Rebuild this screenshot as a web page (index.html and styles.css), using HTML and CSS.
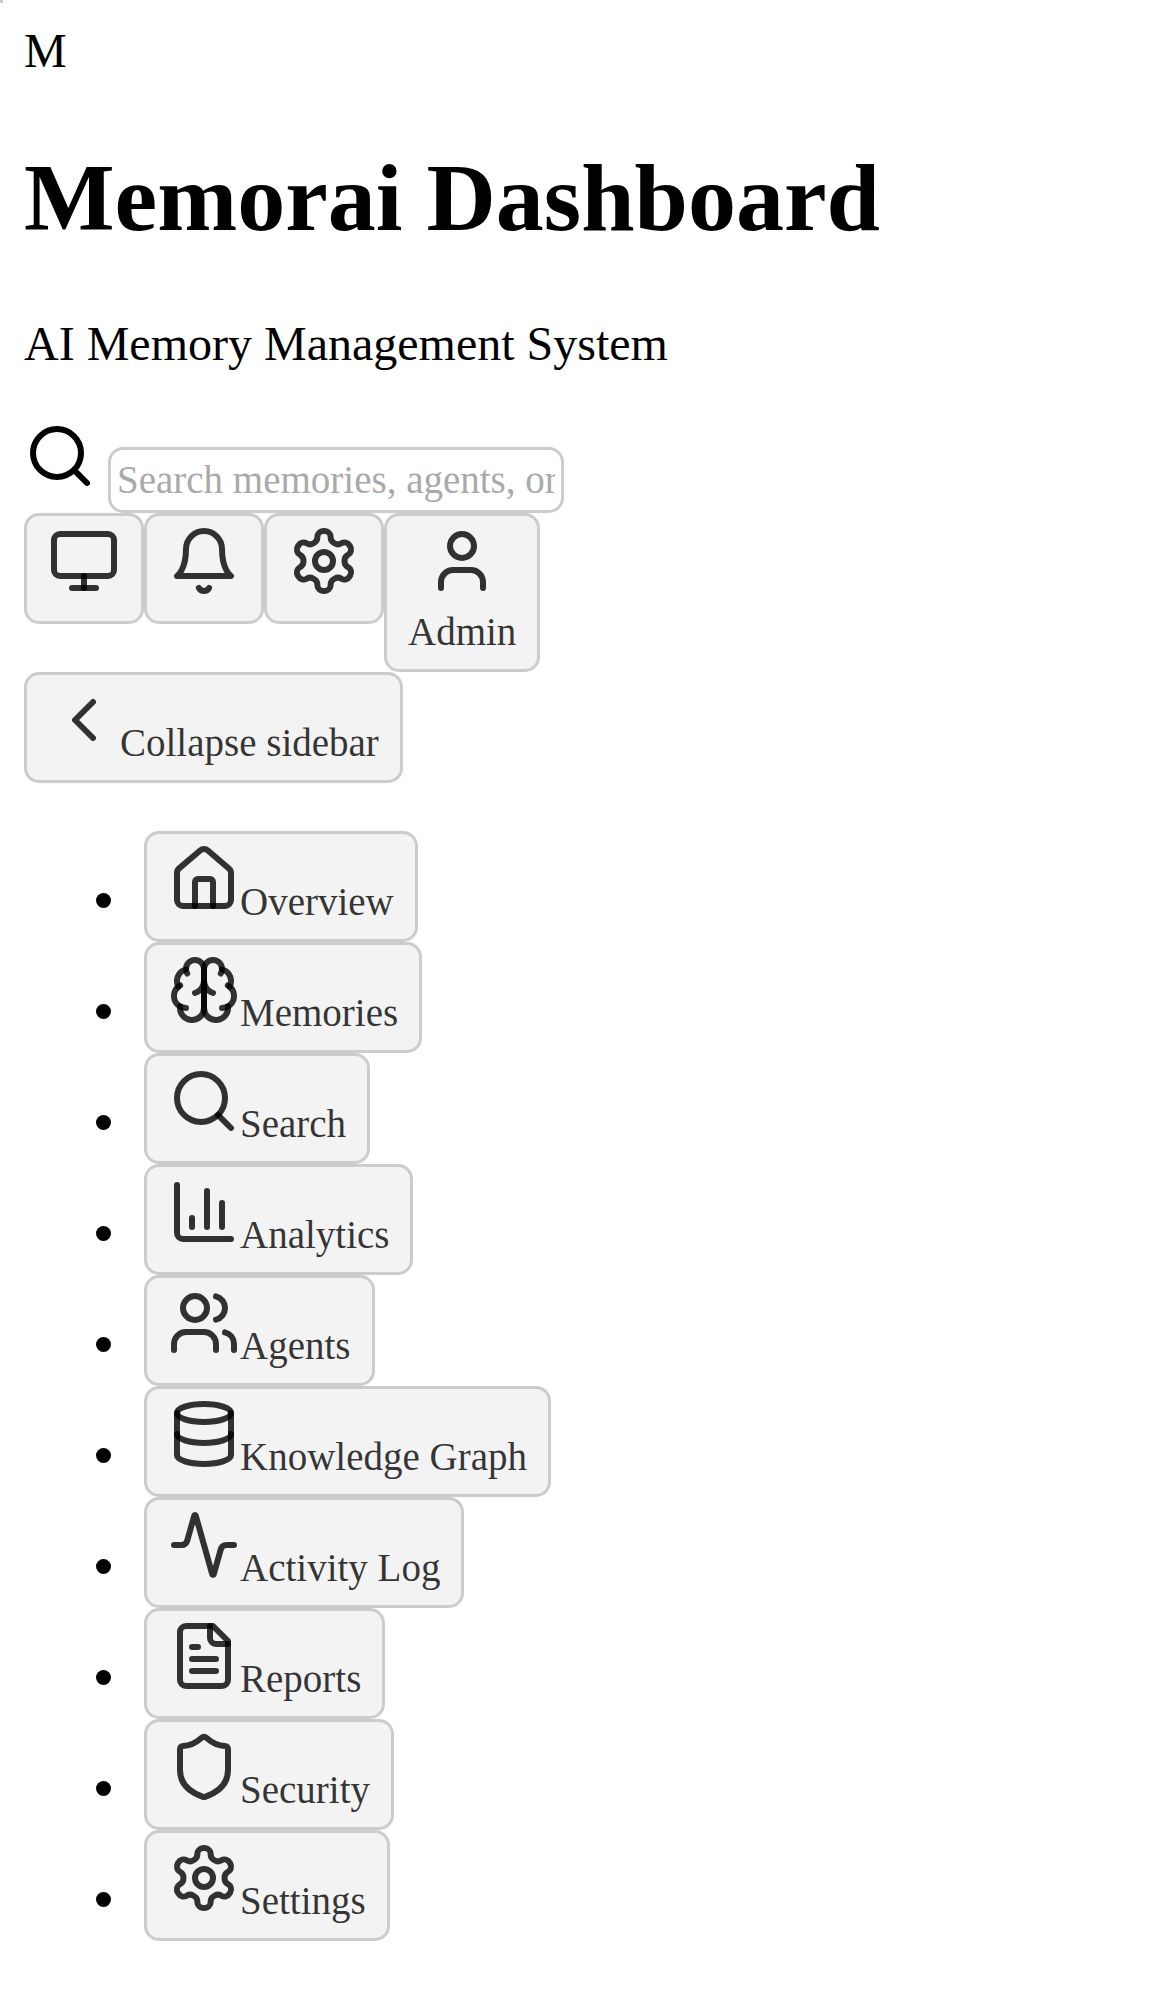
FILE: index.html
```html
<!DOCTYPE html>
<html lang="en">
<head>
<meta charset="utf-8">
<title>Memorai Dashboard</title>
<link rel="stylesheet" href="styles.css">
</head>
<body>
<span class="marker"></span>
<header>
<div>M</div>
<h1 class="title">Memorai Dashboard</h1>
<p class="subtitle">AI Memory Management System</p>
<div class="search">
<svg class="icon" viewBox="0 0 24 24"><circle cx="11" cy="11" r="8"/><path d="m21 21-4.3-4.3"/></svg>
<input class="field" type="text" aria-label="Search" placeholder="Search memories, agents, or content...">
</div>
<div class="actions">
<button class="btn" aria-label="Theme"><svg class="icon" viewBox="0 0 24 24"><rect width="20" height="14" x="2" y="3" rx="2"/><path d="M8 21h8"/><path d="M12 17v4"/></svg></button>
<button class="btn" aria-label="Notifications"><svg class="icon" viewBox="0 0 24 24"><path d="M6 8a6 6 0 0 1 12 0c0 7 3 9 3 9H3s3-2 3-9"/><path d="M10.3 21a1.94 1.94 0 0 0 3.4 0"/></svg></button>
<button class="btn" aria-label="Settings"><svg class="icon" viewBox="0 0 24 24"><path d="M12.22 2h-.44a2 2 0 0 0-2 2v.18a2 2 0 0 1-1 1.73l-.43.25a2 2 0 0 1-2 0l-.15-.08a2 2 0 0 0-2.73.73l-.22.38a2 2 0 0 0 .73 2.73l.15.1a2 2 0 0 1 1 1.72v.51a2 2 0 0 1-1 1.74l-.15.09a2 2 0 0 0-.73 2.73l.22.38a2 2 0 0 0 2.73.73l.15-.08a2 2 0 0 1 2 0l.43.25a2 2 0 0 1 1 1.73V20a2 2 0 0 0 2 2h.44a2 2 0 0 0 2-2v-.18a2 2 0 0 1 1-1.73l.43-.25a2 2 0 0 1 2 0l.15.08a2 2 0 0 0 2.73-.73l.22-.39a2 2 0 0 0-.73-2.73l-.15-.08a2 2 0 0 1-1-1.74v-.5a2 2 0 0 1 1-1.74l.15-.09a2 2 0 0 0 .73-2.73l-.22-.38a2 2 0 0 0-2.73-.73l-.15.08a2 2 0 0 1-2 0l-.43-.25a2 2 0 0 1-1-1.73V4a2 2 0 0 0-2-2z"/><circle cx="12" cy="12" r="3"/></svg></button>
<button class="btn"><svg class="icon" viewBox="0 0 24 24"><path d="M19 21v-2a4 4 0 0 0-4-4H9a4 4 0 0 0-4 4v2"/><circle cx="12" cy="7" r="4"/></svg><span class="user">Admin</span></button>
</div>
</header>
<nav>
<button class="btn"><svg class="icon" viewBox="0 0 24 24"><path d="m15 18-6-6 6-6"/></svg>Collapse sidebar</button>
<ul class="menu">
<li class="item"><button class="btn"><svg class="icon" viewBox="0 0 24 24"><path d="M15 21v-8a1 1 0 0 0-1-1h-4a1 1 0 0 0-1 1v8"/><path d="M3 10a2 2 0 0 1 .709-1.528l7-5.999a2 2 0 0 1 2.582 0l7 5.999A2 2 0 0 1 21 10v9a2 2 0 0 1-2 2H5a2 2 0 0 1-2-2z"/></svg>Overview</button></li>
<li class="item"><button class="btn"><svg class="icon" viewBox="0 0 24 24"><path d="M12 5a3 3 0 1 0-5.997.125 4 4 0 0 0-2.526 5.77 4 4 0 0 0 .556 6.588A4 4 0 1 0 12 18Z"/><path d="M12 5a3 3 0 1 1 5.997.125 4 4 0 0 1 2.526 5.77 4 4 0 0 1-.556 6.588A4 4 0 1 1 12 18Z"/><path d="M15 13a4.5 4.5 0 0 1-3-4 4.5 4.5 0 0 1-3 4"/><path d="M17.599 6.5a3 3 0 0 0 .399-1.375"/><path d="M6.003 5.125A3 3 0 0 0 6.401 6.5"/><path d="M3.477 10.896a4 4 0 0 1 .585-.396"/><path d="M19.938 10.5a4 4 0 0 1 .585.396"/><path d="M6 18a4 4 0 0 1-1.967-.516"/><path d="M19.967 17.484A4 4 0 0 1 18 18"/></svg>Memories</button></li>
<li class="item"><button class="btn"><svg class="icon" viewBox="0 0 24 24"><circle cx="11" cy="11" r="8"/><path d="m21 21-4.3-4.3"/></svg>Search</button></li>
<li class="item"><button class="btn"><svg class="icon" viewBox="0 0 24 24"><path d="M3 3v16a2 2 0 0 0 2 2h16"/><path d="M18 17V9"/><path d="M13 17V5"/><path d="M8 17v-3"/></svg>Analytics</button></li>
<li class="item"><button class="btn"><svg class="icon" viewBox="0 0 24 24"><path d="M16 21v-2a4 4 0 0 0-4-4H6a4 4 0 0 0-4 4v2"/><circle cx="9" cy="7" r="4"/><path d="M22 21v-2a4 4 0 0 0-3-3.87"/><path d="M16 3.13a4 4 0 0 1 0 7.75"/></svg>Agents</button></li>
<li class="item"><button class="btn"><svg class="icon" viewBox="0 0 24 24"><ellipse cx="12" cy="5" rx="9" ry="3"/><path d="M3 5v14a9 3 0 0 0 18 0V5"/><path d="M3 12a9 3 0 0 0 18 0"/></svg>Knowledge Graph</button></li>
<li class="item"><button class="btn"><svg class="icon" viewBox="0 0 24 24"><path d="M22 12h-2.480a2 2 0 0 0-1.930 1.460l-2.350 8.360a.25.25 0 0 1-.480 0L9.240 2.180a.25.25 0 0 0-.480 0l-2.350 8.360A2 2 0 0 1 4.490 12H2"/></svg>Activity Log</button></li>
<li class="item"><button class="btn"><svg class="icon" viewBox="0 0 24 24"><path d="M15 2H6a2 2 0 0 0-2 2v16a2 2 0 0 0 2 2h12a2 2 0 0 0 2-2V7Z"/><path d="M14 2v4a2 2 0 0 0 2 2h4"/><path d="M10 9H8"/><path d="M16 13H8"/><path d="M16 17H8"/></svg>Reports</button></li>
<li class="item"><button class="btn"><svg class="icon" viewBox="0 0 24 24"><path d="M20 13c0 5-3.500 7.500-7.660 8.950a1 1 0 0 1-.670-.010C7.500 20.500 4 18 4 13V6a1 1 0 0 1 1-1c2 0 4.500-1.200 6.240-2.720a1.170 1.170 0 0 1 1.520 0C14.510 3.810 17 5 19 5a1 1 0 0 1 1 1z"/></svg>Security</button></li>
<li class="item"><button class="btn"><svg class="icon" viewBox="0 0 24 24"><path d="M12.22 2h-.44a2 2 0 0 0-2 2v.18a2 2 0 0 1-1 1.73l-.43.25a2 2 0 0 1-2 0l-.15-.08a2 2 0 0 0-2.73.73l-.22.38a2 2 0 0 0 .73 2.73l.15.1a2 2 0 0 1 1 1.72v.51a2 2 0 0 1-1 1.74l-.15.09a2 2 0 0 0-.73 2.73l.22.38a2 2 0 0 0 2.73.73l.15-.08a2 2 0 0 1 2 0l.43.25a2 2 0 0 1 1 1.73V20a2 2 0 0 0 2 2h.44a2 2 0 0 0 2-2v-.18a2 2 0 0 1 1-1.73l.43-.25a2 2 0 0 1 2 0l.15.08a2 2 0 0 0 2.73-.73l.22-.39a2 2 0 0 0-.73-2.73l-.15-.08a2 2 0 0 1-1-1.74v-.5a2 2 0 0 1 1-1.74l.15-.09a2 2 0 0 0 .73-2.73l-.22-.38a2 2 0 0 0-2.73-.73l-.15.08a2 2 0 0 1-2 0l-.43-.25a2 2 0 0 1-1-1.73V4a2 2 0 0 0-2-2z"/><circle cx="12" cy="12" r="3"/></svg>Settings</button></li>
</ul>
</nav>
</body>
</html>
```
FILE: styles.css
```css
body {
  margin: 24px;
  background: #fff;
  color: #000;
  font: 48px/54px "Liberation Serif", "Times New Roman", serif;
}

.marker {
  position: absolute;
  top: 0;
  left: 0;
  width: 3px;
  height: 3px;
  background: #ccc;
}

.title {
  margin: 64px 0;
  font-size: 96px;
  line-height: 111px;
}

.subtitle {
  margin: 48px 0 49px;
}

.icon {
  width: 72px;
  height: 72px;
  fill: none;
  stroke: currentColor;
  stroke-width: 2;
  stroke-linecap: round;
  stroke-linejoin: round;
}

.search {
  display: flex;
  align-items: flex-start;
  gap: 12px;
}

.field {
  box-sizing: border-box;
  width: 456px;
  height: 66px;
  margin: 27px 0 0;
  padding: 0 6px 2px;
  border: 3px solid #ccc;
  border-radius: 15px;
  background: #fff;
  font: inherit;
  font-size: 39px;
}

.field::placeholder {
  color: #a9a9a9;
}

.actions {
  display: flex;
  align-items: flex-start;
}

.btn {
  display: block;
  margin: 0;
  padding: 9px 21px 13px;
  border: 3px solid #ccc;
  border-radius: 15px;
  background: #f3f3f3;
  color: rgba(0, 0, 0, 0.8);
  font: inherit;
  font-size: 39px;
  line-height: 48px;
  text-align: center;
}

.user {
  display: block;
}

.menu {
  margin: 48px 0;
  padding-left: 72px;
  list-style: none;
}

.item {
  display: flex;
  align-items: flex-start;
  gap: 33px;
}

.item::before {
  content: "";
  width: 15px;
  height: 15px;
  margin-top: 62px;
  border-radius: 50%;
  background: #000;
}
```
